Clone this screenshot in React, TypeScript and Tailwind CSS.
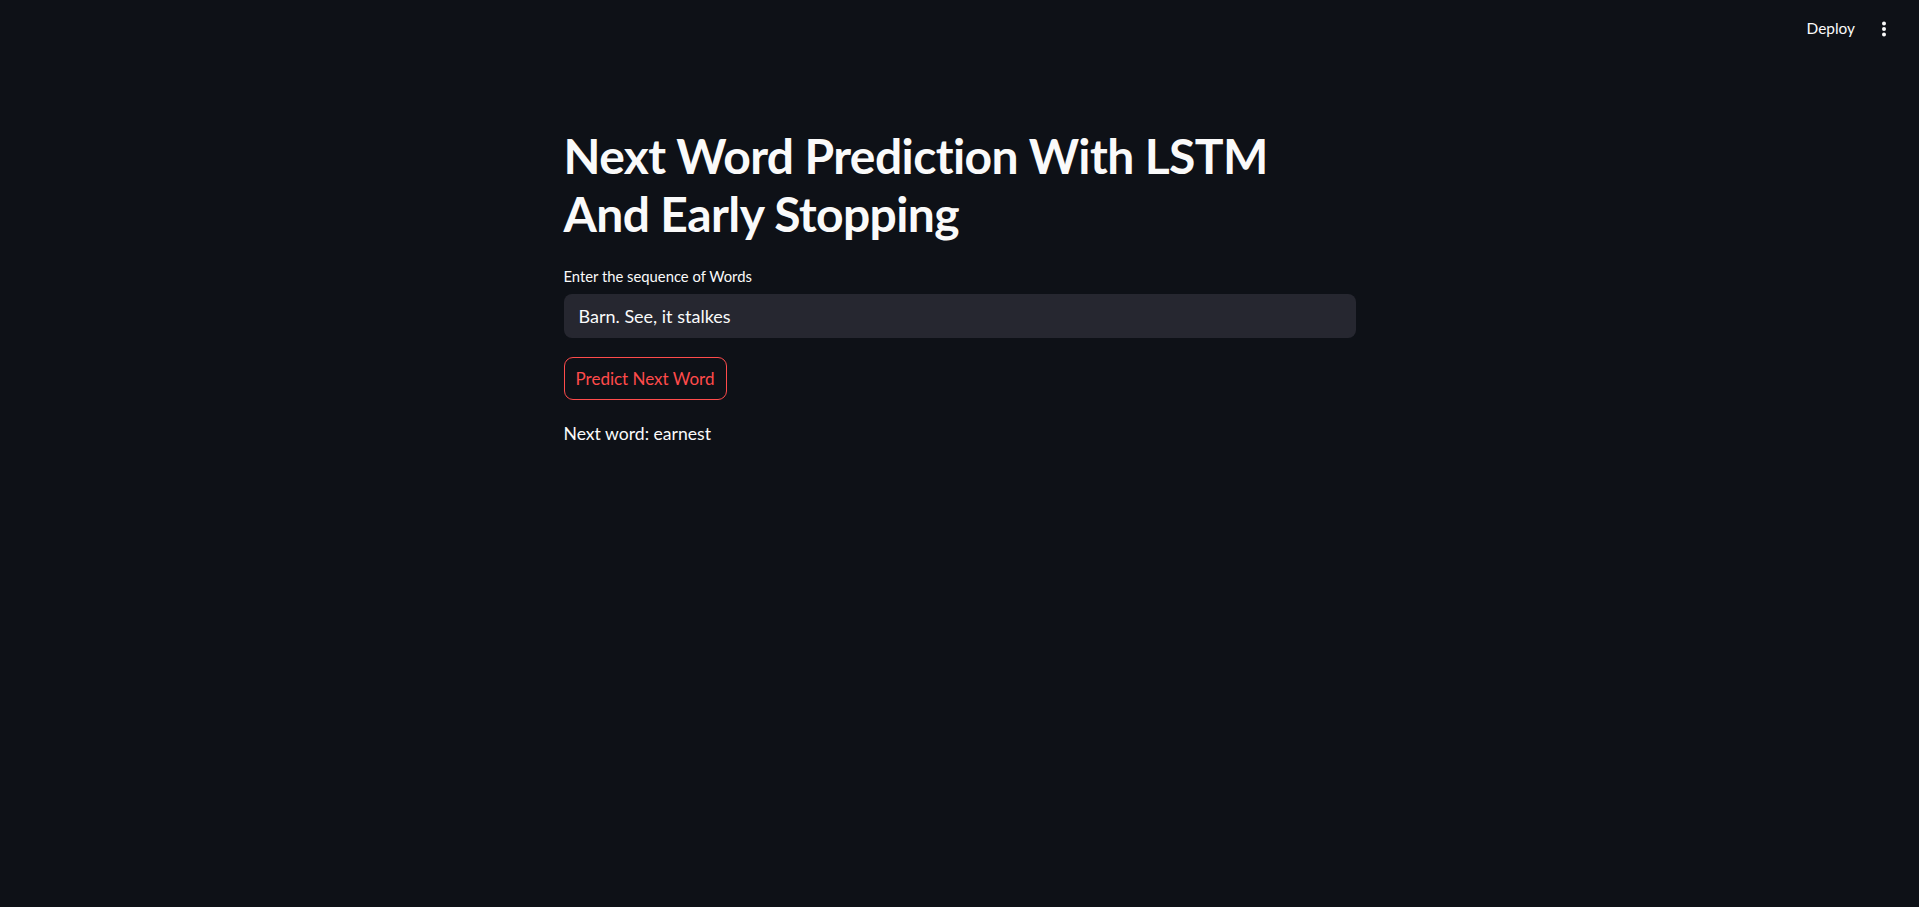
import React from "react";

export default function App() {
  return (
    <div className="min-h-screen w-full bg-[#0e1117] text-[#fafafa] font-['Lato',_'Liberation_Sans',_sans-serif]">
      <header className="flex h-[58px] items-center justify-end pr-[24px]">
        <button className="text-[15.4px] leading-none text-[#fafafa] mr-[26px]">Deploy</button>
        <svg width="6" height="16" viewBox="0 0 6 16" className="mr-[8px]">
          <circle cx="3" cy="2.5" r="2" fill="#fafafa" />
          <circle cx="3" cy="8" r="2" fill="#fafafa" />
          <circle cx="3" cy="13.5" r="2" fill="#fafafa" />
        </svg>
      </header>
      <main className="mx-auto w-[792px] pt-[69px]">
        <h1 className="text-[48px] font-bold leading-[58px] tracking-[-0.6px]">
          Next Word Prediction With LSTM
          <br />
          And Early Stopping
        </h1>
        <label className="mt-[23px] block text-[14.8px] leading-[20px]">Enter the sequence of Words</label>
        <div className="mt-[8px] flex h-[44px] items-center rounded-[8px] bg-[#262730] px-[15px] text-[18px]">
          Barn. See, it stalkes
        </div>
        <button className="mt-[19px] h-[43px] w-[163px] rounded-[9px] border border-[#ff4b4b] text-[17px] text-[#ff4b4b]">
          Predict Next Word
        </button>
        <p className="mt-[21px] text-[17.6px] leading-[26px]">Next word: earnest</p>
      </main>
    </div>
  );
}
